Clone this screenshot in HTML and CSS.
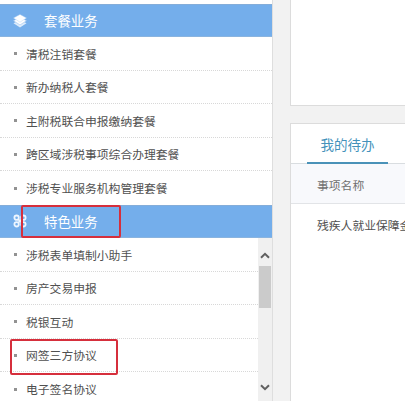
FILE: index.html
```html
<!DOCTYPE html>
<html lang="zh-CN">
<head>
<meta charset="utf-8">
<title>我的待办</title>
<link rel="stylesheet" href="styles.css">
</head>
<body>
<div class="page">
  <aside class="sidebar">
    <section class="group">
      <h2 class="group-title">
        <svg class="icon" viewBox="0 0 14 14"><path d="M7 5.8 13.5 9.3 7 13.4.5 9.3z" fill="#dcebfb"/><path d="M7 3.2 13.5 6.8 7 10.9.5 6.8z" fill="#fff" stroke="#9dc5f0" stroke-width=".6"/><path d="M7 .4 13.5 4 7 8.2.5 4z" fill="#fff" stroke="#a9cdf2" stroke-width=".4"/></svg>
        <span>套餐业务</span>
      </h2>
      <ul class="menu">
        <li>清税注销套餐</li>
        <li>新办纳税人套餐</li>
        <li>主附税联合申报缴纳套餐</li>
        <li>跨区域涉税事项综合办理套餐</li>
        <li>涉税专业服务机构管理套餐</li>
      </ul>
    </section>
    <section class="group">
      <h2 class="group-title">
        <svg class="icon" viewBox="0 0 14 14" fill="none" stroke="#eef6ff" stroke-width="1.8"><circle cx="3.6" cy="3.7" r="2.2"/><circle cx="10.4" cy="3.7" r="2.2"/><circle cx="3.6" cy="10.3" r="2.2"/><circle cx="10.4" cy="10.3" r="2.2"/><path d="M5 5.2 9 8.8M9 5.2 5 8.8"/></svg>
        <span>特色业务</span>
        <i class="mark mark-title"></i>
      </h2>
      <div class="scroll-area">
        <ul class="menu">
          <li>涉税表单填制小助手</li>
          <li>房产交易申报</li>
          <li>税银互动</li>
          <li>网签三方协议<i class="mark mark-item"></i></li>
          <li>电子签名协议</li>
        </ul>
        <div class="scrollbar">
          <svg class="arrow" viewBox="0 0 10 7"><path d="M1 5.8 5 1.8 9 5.8"/></svg>
          <div class="thumb"></div>
          <svg class="arrow arrow-down" viewBox="0 0 10 7"><path d="M1 1.2 5 5.2 9 1.2"/></svg>
        </div>
      </div>
    </section>
  </aside>
  <main class="content">
    <section class="panel panel-top"></section>
    <section class="panel panel-todo">
      <nav class="tabs"><span class="tab">我的待办</span></nav>
      <div class="table-head">事项名称</div>
      <div class="table-row">残疾人就业保障金</div>
    </section>
  </main>
</div>
</body>
</html>
```
FILE: styles.css
```css
* { box-sizing: border-box; }
body {
  margin: 0;
  overflow: hidden;
  background: #f2f2f2;
  color: #505050;
  font: 11.8px/1.4 "Noto Sans CJK SC", sans-serif;
}
.page { display: flex; width: 405px; height: 401px; overflow: hidden; }
.sidebar {
  flex: none;
  width: 273px;
  padding-top: 4px;
  background: #fff;
  border-right: 1px solid #dedede;
}
.group-title {
  position: relative;
  display: flex;
  align-items: center;
  gap: 18px;
  height: 33px;
  margin: 0;
  padding-left: 13px;
  background: #74aeeb;
  border-top: 1px solid #84add9;
  border-bottom: 1px solid #8ab4df;
  color: #fff;
  font-size: 13.4px;
  font-weight: 400;
}
.group-title span { margin-left: -1px; }
.icon { width: 14px; height: 14px; }
.menu { flex: 1; margin: 0; padding: 0; list-style: none; }
.menu li {
  position: relative;
  display: flex;
  align-items: center;
  height: 33.6px;
  padding: 1px 0 0 14px;
  border-bottom: 1px dotted #d8d8d8;
  white-space: nowrap;
}
.menu li:last-child { border-bottom-color: transparent; }
.menu li::before {
  content: "";
  width: 3px;
  height: 3px;
  margin-right: 9px;
  background: #929292;
}
.scroll-area { display: flex; height: 164px; }
.scrollbar {
  display: flex;
  flex-direction: column;
  align-items: center;
  width: 14px;
  padding: 14px 0 9px;
  background: #f0f0f0;
}
.arrow { flex: none; width: 10px; height: 7px; fill: none; stroke: #606060; stroke-width: 2; }
.thumb { flex: none; width: 12px; height: 42px; margin-top: 7px; background: #cbcbcb; }
.arrow-down { margin-top: 76px; }
.mark { position: absolute; border: 2.5px solid #d62f3c; border-radius: 2px; }
.mark-title { left: 21px; top: -1px; width: 100px; height: 33px; }
.mark-item { left: 10px; top: 0; width: 108px; height: 36px; z-index: 1; }
.content {
  display: flex;
  flex: 1;
  flex-direction: column;
  gap: 17px;
  margin-left: 17px;
  overflow: hidden;
}
.panel { background: #fff; border: 1px solid #dcdcdc; border-right: 0; }
.panel-top { height: 106px; border-top: 0; }
.panel-todo { flex: 1; border-bottom: 0; }
.tabs { height: 40px; padding-left: 16px; border-bottom: 1px solid #d9dde0; }
.tab {
  display: block;
  width: 81px;
  height: 40px;
  border-bottom: 2px solid #4a92b8;
  color: #4492bb;
  font-size: 13.5px;
  line-height: 40px;
  text-align: center;
}
.table-head {
  height: 40px;
  padding-left: 26px;
  background: #f8f9fc;
  border-bottom: 1px solid #e2e4e7;
  color: #707070;
  line-height: 42px;
}
.table-row { padding-left: 26px; line-height: 42px; white-space: nowrap; }
```
